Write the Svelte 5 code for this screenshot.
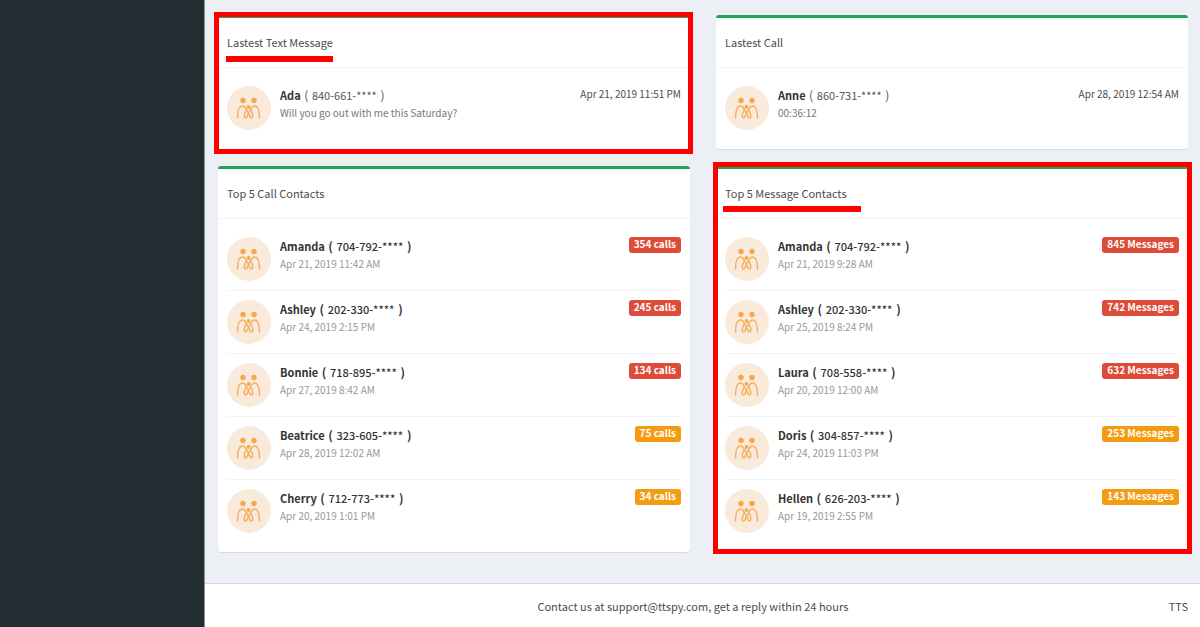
<script>
	const panels = [
		{
			title: 'Lastest Text Message',
			mark: 'short',
			items: [
				{ name: 'Ada', phone: '840-661-****', info: 'Will you go out with me this Saturday?', time: 'Apr 21, 2019 11:51 PM' }
			]
		},
		{
			title: 'Lastest Call',
			items: [{ name: 'Anne', phone: '860-731-****', info: '00:36:12', time: 'Apr 28, 2019 12:54 AM' }]
		},
		{
			title: 'Top 5 Call Contacts',
			items: [
				{ name: 'Amanda', phone: '704-792-****', info: 'Apr 21, 2019 11:42 AM', count: '354 calls', level: 'red' },
				{ name: 'Ashley', phone: '202-330-****', info: 'Apr 24, 2019 2:15 PM', count: '245 calls', level: 'red' },
				{ name: 'Bonnie', phone: '718-895-****', info: 'Apr 27, 2019 8:42 AM', count: '134 calls', level: 'red' },
				{ name: 'Beatrice', phone: '323-605-****', info: 'Apr 28, 2019 12:02 AM', count: '75 calls', level: 'orange' },
				{ name: 'Cherry', phone: '712-773-****', info: 'Apr 20, 2019 1:01 PM', count: '34 calls', level: 'orange' }
			]
		},
		{
			title: 'Top 5 Message Contacts',
			mark: 'tall',
			items: [
				{ name: 'Amanda', phone: '704-792-****', info: 'Apr 21, 2019 9:28 AM', count: '845 Messages', level: 'red' },
				{ name: 'Ashley', phone: '202-330-****', info: 'Apr 25, 2019 8:24 PM', count: '742 Messages', level: 'red' },
				{ name: 'Laura', phone: '708-558-****', info: 'Apr 20, 2019 12:00 AM', count: '632 Messages', level: 'red' },
				{ name: 'Doris', phone: '304-857-****', info: 'Apr 24, 2019 11:03 PM', count: '253 Messages', level: 'orange' },
				{ name: 'Hellen', phone: '626-203-****', info: 'Apr 19, 2019 2:55 PM', count: '143 Messages', level: 'orange' }
			]
		}
	];
</script>

<div class="wrapper">
	<aside class="sidebar"></aside>
	<div class="page">
		<main class="content">
			{#each panels as panel}
				<section class="box">
					<header class="box-header">
						<h3 class="box-title {panel.mark ? 'marked ' + panel.mark : ''}">{panel.title}</h3>
					</header>
					<ul class="list">
						{#each panel.items as item}
							<li class="item">
								<svg class="avatar" viewBox="0 0 44 44" aria-hidden="true">
									<circle cx="22" cy="22" r="22" fill="#f9eadb" />
									<g fill="#f4aa4c">
										<circle cx="16" cy="14.500" r="2.700" />
										<circle cx="27" cy="14.500" r="2.700" />
										<circle cx="21.500" cy="21" r="1.900" />
									</g>
									<g fill="none" stroke="#f4b15d" stroke-width="1.500" stroke-linecap="round" stroke-linejoin="round">
										<path d="M10.500 32C10.500 25 12 20 15.500 20C18.500 20 19.500 24 21.500 27.500C22.500 29.500 23 32 24.500 32C26.500 32 26 28 23.800 24" />
										<path d="M32.500 32C32.500 25 31 20 27.500 20C24.500 20 23.500 24 21.500 27.500C20.500 29.500 20 32 18.500 32C16.500 32 17 28 19.200 24" />
									</g>
								</svg>
								<div class="info">
									<div class="name">
										{item.name}
										<span class="number {item.count ? '' : 'light'}">( <span class="phone">{item.phone}</span> )</span>
									</div>
									<div class="sub {item.count ? '' : 'dark'}">{item.info}</div>
								</div>
								{#if item.count}
									<span class="label {item.level}">{item.count}</span>
								{:else}
									<span class="time">{item.time}</span>
								{/if}
							</li>
						{/each}
					</ul>
					{#if panel.mark}
						<div class="frame {panel.mark}"></div>
					{/if}
				</section>
			{/each}
		</main>
		<footer class="footer">
			<span class="contact">Contact us at support@ttspy.com, get a reply within 24 hours</span>
			<span>TTS</span>
		</footer>
	</div>
</div>

<style>
	:global(body) {
		margin: 0;
		background: #ecf0f5;
	}

	.wrapper {
		display: flex;
		min-height: 100vh;
		font-family: 'Source Sans Pro', 'Noto Sans CJK SC', sans-serif;
		font-size: 11px;
		line-height: 18px;
		color: #4c4c4c;
	}

	.sidebar {
		flex: 0 0 17%;
		background: #222d32;
		border-right: 1px solid #8b9196;
	}

	.page {
		flex: 1;
		min-width: 0;
		display: flex;
		flex-direction: column;
		background: #ecf0f5;
	}

	.content {
		flex: 1;
		display: grid;
		grid-template-columns: 1fr 1fr;
		align-content: start;
		gap: 17px 26px;
		padding: 15px 12px 0 13px;
	}

	.box {
		position: relative;
		background: #fff;
		border-top: 3px solid #1fa35d;
		border-radius: 3px;
		box-shadow: 0 1px 1px rgba(0, 0, 0, 0.1);
	}

	.box-header {
		padding: 15px 9px 16px;
		border-bottom: 1px solid #f4f4f4;
	}

	.box-title {
		position: relative;
		width: fit-content;
		margin: 0;
		font-size: 11px;
		font-weight: 400;
		line-height: 18px;
	}

	.marked::after {
		content: '';
		position: absolute;
		top: 23px;
		left: -1px;
		right: 0;
		height: 6px;
		background: #f00;
	}

	.marked.tall::after {
		top: 22px;
		left: -2px;
		right: -14px;
	}

	.list {
		list-style: none;
		margin: 0;
		padding: 9px 9px 10px;
	}

	.item {
		display: flex;
		padding: 9px 0;
		border-bottom: 1px solid #f4f4f4;
	}

	.item:last-child {
		border-bottom: none;
	}

	.avatar {
		width: 44px;
		height: 44px;
		margin-right: 9px;
	}

	.info {
		flex: 1;
		min-width: 0;
	}

	.name {
		font-weight: 700;
		color: #333;
	}

	.number {
		margin-left: 1px;
		font-size: 12px;
	}

	.phone {
		margin: 0 1px;
		font-size: 11px;
		font-weight: 500;
	}

	.light,
	.light .phone {
		font-weight: 400;
		color: #555;
	}

	.sub {
		font-size: 10px;
		color: #999;
	}

	.dark {
		color: #777;
	}

	.time {
		font-size: 10px;
		line-height: 16px;
	}

	.label {
		align-self: flex-start;
		padding: 0 5px 2px;
		border-radius: 3px;
		font-size: 10px;
		font-weight: 700;
		line-height: 14px;
		color: #fff;
	}

	.red {
		background: #dd4b39;
	}

	.orange {
		background: #f39c12;
	}

	.frame {
		position: absolute;
		inset: -6px -3px -5px -4px;
		border: 5px solid #f00;
		pointer-events: none;
	}

	.frame.tall {
		inset: -7px -4px -2px -3px;
	}

	.footer {
		display: flex;
		padding: 13px 12px 12px;
		background: #fff;
		border-top: 1px solid #d2d6de;
	}

	.contact {
		flex: 1;
		text-align: center;
	}
</style>
